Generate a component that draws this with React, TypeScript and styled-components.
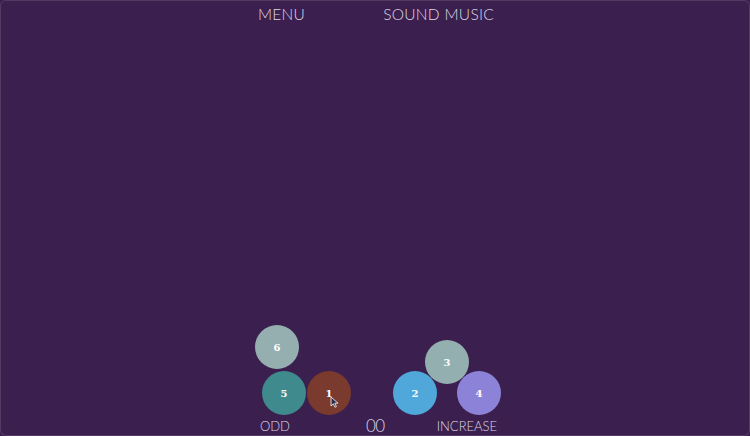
import styled, { createGlobalStyle } from "styled-components";

const GlobalStyle = createGlobalStyle`
  html, body {
    margin: 0;
    padding: 0;
    background: #3b1f4e;
  }
  #root {
    height: 100vh;
  }
`;

const Screen = styled.div`
  box-sizing: border-box;
  height: 100vh;
  display: flex;
  flex-direction: column;
  background: #3b1f4e;
  border: 1px solid rgba(255, 255, 255, 0.12);
  border-radius: 6px;
  overflow: hidden;
  font-family: Lato, "Open Sans", sans-serif;
  font-weight: 300;
  color: #dcd8e4;
`;

const TopNav = styled.nav`
  display: flex;
  justify-content: center;
  gap: 78px;
  padding: 4px 0 0 2px;
  height: 26px;
  box-sizing: border-box;
`;

const NavLink = styled.span`
  font-size: 15.5px;
  letter-spacing: 0.3px;
  cursor: pointer;
`;

const Stage = styled.div`
  position: relative;
  flex: 1;
`;

const Ball = styled.div<{ $color: string }>`
  position: absolute;
  width: 44px;
  height: 44px;
  border-radius: 50%;
  background: ${p => p.$color};
  display: flex;
  align-items: center;
  justify-content: center;
  color: #ffffff;
  font-family: "DejaVu Serif", "Liberation Serif", serif;
  font-weight: bold;
  font-size: 10px;
`;

const Cursor = styled.svg`
  position: absolute;
  left: 329px;
  bottom: 7px;
  width: 9px;
  height: 12px;
`;

const Footer = styled.footer`
  height: 20px;
  display: flex;
  align-items: center;
  justify-content: center;
  padding: 1px 0 0 7px;
  box-sizing: border-box;
`;

const Label = styled.span<{ $gap?: number }>`
  font-size: 13px;
  margin-right: ${p => p.$gap ?? 0}px;
`;

const Score = styled.span<{ $gap?: number }>`
  font-size: 17px;
  font-weight: 300;
  letter-spacing: -0.5px;
  margin-right: ${p => p.$gap ?? 0}px;
`;

interface BallData {
  n: number;
  x: number;
  bottom: number;
  color: string;
}

const balls: BallData[] = [
  { n: 6, x: 254, bottom: 46, color: "#95afb0" },
  { n: 5, x: 261, bottom: 0, color: "#3f8a8d" },
  { n: 1, x: 306, bottom: 0, color: "#7b3a2e" },
  { n: 2, x: 392, bottom: 0, color: "#4fa7da" },
  { n: 3, x: 424, bottom: 31, color: "#93afb0" },
  { n: 4, x: 456, bottom: 0, color: "#8c83d9" },
];

export default function App() {
  return (
    <>
      <GlobalStyle />
      <Screen>
        <TopNav>
          <NavLink>MENU</NavLink>
          <NavLink>SOUND MUSIC</NavLink>
        </TopNav>
        <Stage>
          {balls.map(b => (
            <Ball
              key={b.n}
              $color={b.color}
              style={{ left: b.x, bottom: b.bottom }}
            >
              {b.n}
            </Ball>
          ))}
          <Cursor viewBox="0 0 9 12">
            <path
              d="M1 1 L1 10 L3.3 7.8 L5 11.3 L6.4 10.6 L4.8 7.2 L8 7.2 Z"
              fill="#2c2f4a"
              stroke="#e8e8f0"
              strokeWidth="0.9"
              strokeLinejoin="round"
            />
          </Cursor>
        </Stage>
        <Footer>
          <Label $gap={76}>ODD</Label>
          <Score $gap={52}>00</Score>
          <Label>INCREASE</Label>
        </Footer>
      </Screen>
    </>
  );
}
